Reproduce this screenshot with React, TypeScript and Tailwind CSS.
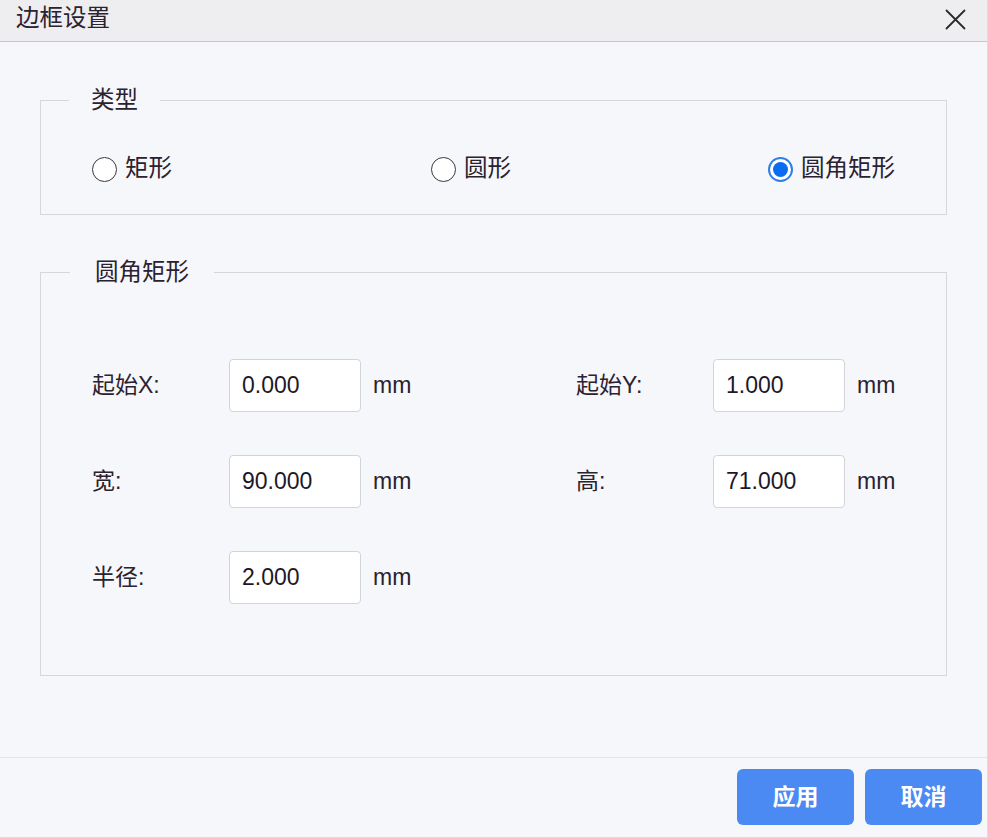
import React, { useState } from 'react';

const font = { fontFamily: '"Liberation Sans", "Noto Sans CJK SC", sans-serif' };

type Shape = 'rect' | 'circle' | 'rounded';

const Radio = ({ checked, label, onClick }: { checked: boolean; label: string; onClick: () => void }) => (
  <button type="button" onClick={onClick} className="flex items-center h-[32px] text-left">
    {checked ? (
      <span className="w-[25px] h-[25px] rounded-full border-2 border-[#2f7de8] bg-white flex items-center justify-center">
        <span className="w-[15px] h-[15px] rounded-full bg-[#0b6cf2]" />
      </span>
    ) : (
      <span className="w-[25px] h-[25px] rounded-full border border-[#3b3540] bg-white" />
    )}
    <span className="ml-[8px] text-[23.5px] leading-none">{label}</span>
  </button>
);

const Field = ({ label, value, onChange, wide }: { label: string; value: string; onChange: (v: string) => void; wide?: boolean }) => (
  <div className={`flex items-center ${wide ? 'w-[484px]' : ''}`}>
    <span className="w-[137px] text-[23px] leading-none">{label}</span>
    <input
      value={value}
      onChange={(e) => onChange(e.target.value)}
      className="w-[132px] h-[53px] rounded-[4px] border border-[#d2d4d9] bg-white pl-[12px] text-[23px] text-[#1e1826] outline-none"
      style={font}
    />
    <span className="ml-[12px] text-[23px] leading-none">mm</span>
  </div>
);

export default function App() {
  const [shape, setShape] = useState<Shape>('rounded');
  const [vals, setVals] = useState({ x: '0.000', y: '1.000', w: '90.000', h: '71.000', r: '2.000' });
  const set = (k: keyof typeof vals) => (v: string) => setVals({ ...vals, [k]: v });

  return (
    <div className="w-[988px] h-[838px] flex flex-col bg-[#f6f7fa] text-[#2a2231] border-r border-b border-[#dcdde1]" style={font}>
      {/* title bar */}
      <div className="h-[42px] flex items-center justify-between bg-[#eeeef0] border-b border-[#c6c7cb] pl-[16px] pr-[21px]">
        <span className="text-[23.5px] leading-none pb-[3px]">边框设置</span>
        <button type="button" className="w-[21px] h-[21px] mb-[2px]">
          <svg viewBox="0 0 21 21" width="21" height="21" fill="none" stroke="#2a2a2e" strokeWidth="1.8" strokeLinecap="round">
            <path d="M1.5 1.5 L19.5 19.5 M19.5 1.5 L1.5 19.5" />
          </svg>
        </button>
      </div>

      <div className="flex-1">
        {/* type */}
        <fieldset className="mt-[42px] ml-[40px] mr-[40px] border border-[#d5d7db] pt-[37px] pb-[29px]">
          <legend className="ml-[28px] px-[22px] h-[32px] leading-[32px] text-[23.5px]">类型</legend>
          <div className="grid grid-cols-[339px_337px_auto] pl-[51px]">
            <Radio checked={shape === 'rect'} label="矩形" onClick={() => setShape('rect')} />
            <Radio checked={shape === 'circle'} label="圆形" onClick={() => setShape('circle')} />
            <Radio checked={shape === 'rounded'} label="圆角矩形" onClick={() => setShape('rounded')} />
          </div>
        </fieldset>

        {/* params */}
        <fieldset className="mt-[41px] ml-[40px] mr-[40px] border border-[#d5d7db] pt-[71px] pb-[71px]">
          <legend className="ml-[29px] px-[25px] h-[32px] leading-[32px] text-[23.5px]">圆角矩形</legend>
          <div className="flex flex-col gap-[43px] pl-[51px]">
            <div className="flex">
              <Field label="起始X:" value={vals.x} onChange={set('x')} wide />
              <Field label="起始Y:" value={vals.y} onChange={set('y')} />
            </div>
            <div className="flex">
              <Field label="宽:" value={vals.w} onChange={set('w')} wide />
              <Field label="高:" value={vals.h} onChange={set('h')} />
            </div>
            <div className="flex">
              <Field label="半径:" value={vals.r} onChange={set('r')} wide />
            </div>
          </div>
        </fieldset>
      </div>

      {/* footer */}
      <div className="h-[80px] border-t border-[#e3e5e9] flex justify-end items-start gap-[11px] pt-[11px] pr-[5px]">
        <button type="button" className="w-[117px] h-[56px] rounded-[6px] bg-[#4b8af2] text-white text-[23px] font-bold">应用</button>
        <button type="button" className="w-[117px] h-[56px] rounded-[6px] bg-[#4b8af2] text-white text-[23px] font-bold">取消</button>
      </div>
    </div>
  );
}
